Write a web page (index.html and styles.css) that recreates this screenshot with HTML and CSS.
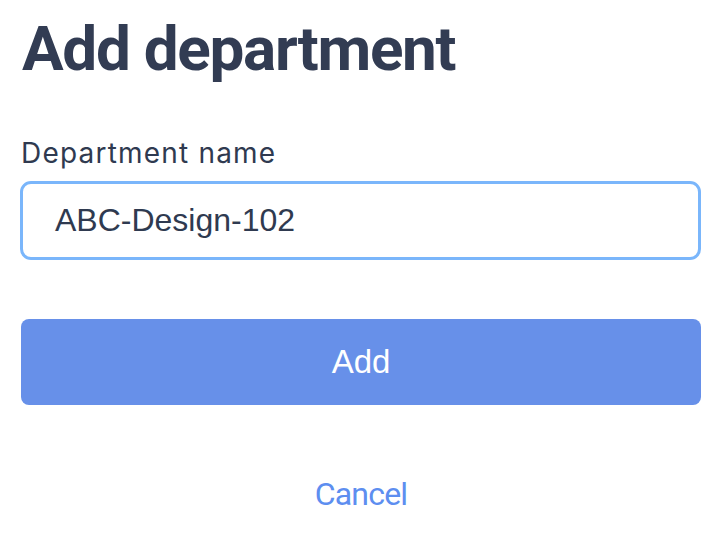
FILE: index.html
```html
<!DOCTYPE html>
<html>
<head>
<meta charset="utf-8">
<link rel="stylesheet" href="styles.css">
</head>
<body>
<main class="form">
  <h1 class="title">Add department</h1>
  <label class="label" for="dept">Department name</label>
  <div class="input">ABC-Design-102</div>
  <button class="btn-primary">Add</button>
  <div class="cancel">Cancel</div>
</main>
</body>
</html>
```

FILE: styles.css
```css
html, body {
  margin: 0;
  padding: 0;
  background: #ffffff;
}
.form {
  display: flex;
  flex-direction: column;
  padding: 0 19px 0 21px;
}
.title {
  margin: 17px 0 0 1px;
  font-family: Roboto, sans-serif;
  font-weight: 700;
  font-size: 62px;
  line-height: 64px;
  letter-spacing: -1.3px;
  color: #323c53;
}
.label {
  margin-top: 55px;
  font-family: Inter, sans-serif;
  font-size: 28px;
  line-height: 34px;
  letter-spacing: 1.2px;
  color: #2f3a50;
  height: 34px;
}
.input {
  margin-top: 11px;
  margin-left: -1px;
  height: 79px;
  box-sizing: border-box;
  border: 3px solid #7ab6fb;
  border-radius: 11px;
  padding-left: 32px;
  display: flex;
  align-items: center;
  font-family: "Liberation Sans", Arial, sans-serif;
  font-size: 32px;
  color: #2f3a50;
}
.btn-primary {
  margin-top: 59px;
  height: 86px;
  border: none;
  border-radius: 8px;
  background: #6790e9;
  color: #ffffff;
  font-family: "Liberation Sans", Arial, sans-serif;
  font-size: 33px;
  padding: 0;
}
.cancel {
  margin-top: 70px;
  text-align: center;
  font-family: Roboto, sans-serif;
  font-size: 32px;
  line-height: 38px;
  letter-spacing: -0.8px;
  color: #5d8ef0;
}
```
